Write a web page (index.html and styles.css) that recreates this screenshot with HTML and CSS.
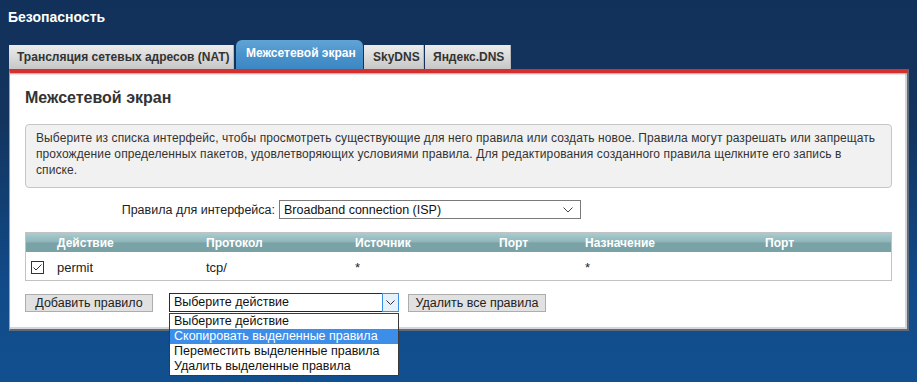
FILE: index.html
```html
<!DOCTYPE html>
<html lang="ru">
<head>
<meta charset="utf-8">
<title>Безопасность</title>
<link rel="stylesheet" href="styles.css">
</head>
<body>
<header class="page-title">Безопасность</header>
<nav class="tabs">
  <div class="tab">Трансляция сетевых адресов (NAT)</div>
  <div class="tab tab-active">Межсетевой экран</div>
  <div class="tab">SkyDNS</div>
  <div class="tab">Яндекс.DNS</div>
</nav>
<main class="panel">
  <h2 class="panel-title">Межсетевой экран</h2>
  <div class="info">Выберите из списка интерфейс, чтобы просмотреть существующие для него правила или создать новое. Правила могут разрешать или запрещать прохождение определенных пакетов, удовлетворяющих условиями правила. Для редактирования созданного правила щелкните его запись в списке.</div>
  <div class="iface-row">
    <span class="iface-label">Правила для интерфейса:</span>
    <div class="iface-select">
      <span>Broadband connection (ISP)</span>
      <svg class="chev" width="10" height="6" viewBox="0 0 10 6"><polyline points="0.5,0.5 5,5 9.5,0.5" fill="none" stroke="#444" stroke-width="1"/></svg>
    </div>
  </div>
  <div class="rules">
    <div class="rules-head">
      <span></span><span>Действие</span><span>Протокол</span><span>Источник</span><span>Порт</span><span>Назначение</span><span>Порт</span>
    </div>
    <div class="rules-row">
      <span class="cb-cell"><svg class="cb" width="13" height="13" viewBox="0 0 13 13"><rect x="0.5" y="0.5" width="12" height="12" fill="#fff" stroke="#333"/><polyline points="2.5,6.5 5,9 10.5,3.5" fill="none" stroke="#333" stroke-width="1"/></svg></span>
      <span>permit</span><span>tcp/</span><span>*</span><span></span><span>*</span><span></span>
    </div>
  </div>
  <div class="actions">
    <button class="btn btn-add">Добавить правило</button>
    <div class="action-select">
      <div class="action-box">
        <span class="action-text">Выберите действие</span>
        <span class="action-arrow"><svg width="9" height="5" viewBox="0 0 9 5"><polyline points="0.5,0.5 4.5,4.5 8.5,0.5" fill="none" stroke="#333" stroke-width="1"/></svg></span>
      </div>
      <ul class="dropdown">
        <li>Выберите действие</li>
        <li class="hl">Скопировать выделенные правила</li>
        <li>Переместить выделенные правила</li>
        <li>Удалить выделенные правила</li>
      </ul>
    </div>
    <button class="btn btn-del">Удалить все правила</button>
  </div>
</main>
</body>
</html>
```
FILE: styles.css
```css
* { box-sizing: border-box; }
html, body { height: 100%; }
body {
  margin: 0;
  min-height: 382px;
  font-family: "Liberation Sans", Arial, sans-serif;
  color: #222;
  background: linear-gradient(to bottom, #12315a 0px, #13345e 120px, #114a88 280px, #11508f 382px);
  overflow: hidden;
}
.page-title {
  padding: 9px 8px 0;
  font-size: 14px;
  line-height: 16px;
  font-weight: bold;
  color: #fff;
}
.tabs {
  display: flex;
  align-items: flex-end;
  margin: 15px 0 0 9px;
  height: 29px;
}
.tab {
  height: 24px;
  line-height: 24px;
  padding: 0 8px;
  font-size: 12px;
  font-weight: bold;
  color: #333;
  background: linear-gradient(to bottom, #ececec, #d6d6d6 60%, #c6c6c6);
  border-right: 1px solid #b8b8b8;
  margin-right: 1px;
  white-space: nowrap;
}
.tab:first-child { width: 225px; margin-right: 2px; }
.tab:nth-child(3) { width: 60px; padding-left: 9px; }
.tab:nth-child(4) { width: 86px; }
.tab-active {
  width: 127px;
  height: 29px;
  line-height: 27px;
  padding: 0 10px;
  text-align: center;
  color: #fff;
  border-right: none;
  border-radius: 6px 6px 0 0;
  background: linear-gradient(to bottom, #62a3d6, #4a93cc 50%, #3c87c3);
}
.panel {
  width: 900px;
  margin-left: 9px;
  background: #fff;
  border-top: 4px solid #d3302e;
  border-left: 1px solid #9aa3ae;
  border-right: 2px solid #5f6b79;
  border-bottom: 2px solid #5f6b79;
  box-shadow: inset 0 2px 2px -1px #9aa1aa, inset -2px -2px 0 #d3d6da;
  padding: 15px 15px 17px;
}
.panel-title {
  margin: 0;
  font-size: 16px;
  line-height: 20px;
  font-weight: bold;
  color: #333;
}
.info {
  margin-top: 16px;
  height: 64px;
  padding: 5px 10px 0;
  background: #f1f1f1;
  border: 1px solid #c6c6c6;
  border-radius: 4px;
  font-size: 12px;
  line-height: 16px;
  letter-spacing: 0.1px;
  color: #333;
}
.iface-row {
  display: flex;
  align-items: center;
  margin-top: 12px;
  height: 19px;
}
.iface-label {
  width: 254px;
  text-align: right;
  padding-right: 4px;
  font-size: 12.5px;
  color: #222;
}
.iface-select {
  width: 302px;
  height: 19px;
  border: 1px solid #7a7a7a;
  display: flex;
  align-items: center;
  justify-content: space-between;
  padding: 0 4px 0 4px;
  font-size: 12.5px;
  color: #111;
}
.chev { margin-right: 3px; }
.rules {
  margin-top: 13px;
  width: 867px;
  border: 1px solid #c2c2c2;
}
.rules-head, .rules-row {
  display: grid;
  grid-template-columns: 31px 149px 149px 144px 86px 180px 1fr;
  align-items: center;
}
.rules-head {
  height: 19px;
  font-size: 12px;
  font-weight: bold;
  color: #fff;
  background: linear-gradient(to bottom, #a9cccf 0%, #90b7bb 45%, #7aa3a8 52%, #78a2a6 100%);
}
.rules-row {
  height: 28px;
  padding-top: 3px;
  font-size: 13px;
  color: #222;
}
.cb-cell { padding-left: 5px; display: flex; align-items: center; }
.cb { display: block; }
.actions {
  display: flex;
  align-items: center;
  margin-top: 12px;
  height: 19px;
}
.btn {
  font-family: inherit;
  font-size: 12.5px;
  color: #222;
  height: 18px;
  padding: 0;
  background: #e1e1e1;
  border: 1px solid #adadad;
  line-height: 16px;
}
.btn-add { width: 128px; }
.btn-del { width: 138px; margin-left: 9px; }
.action-select {
  position: relative;
  margin-left: 16px;
  width: 230px;
  height: 19px;
}
.action-box {
  display: flex;
  height: 19px;
  border: 1px solid #2a2a2a;
  font-size: 12.5px;
  background: #fff;
}
.action-text {
  flex: 1;
  padding-left: 4px;
  line-height: 17px;
  color: #111;
}
.action-arrow {
  width: 17px;
  display: flex;
  align-items: center;
  justify-content: center;
  background: #e5f1fb;
  border: 1px solid #3c8ee0;
  margin: -1px -1px -1px 0;
}
.dropdown {
  position: absolute;
  top: 20px;
  left: 0;
  width: 230px;
  margin: 0;
  padding: 0 0 1px;
  list-style: none;
  background: #fff;
  border: 1px solid #3a3a3a;
  font-size: 12.5px;
  color: #111;
  z-index: 5;
}
.dropdown li {
  height: 15px;
  line-height: 15px;
  padding-left: 4px;
  white-space: nowrap;
}
.dropdown li.hl {
  background: #3d8ee8;
  color: #fff;
}
```
